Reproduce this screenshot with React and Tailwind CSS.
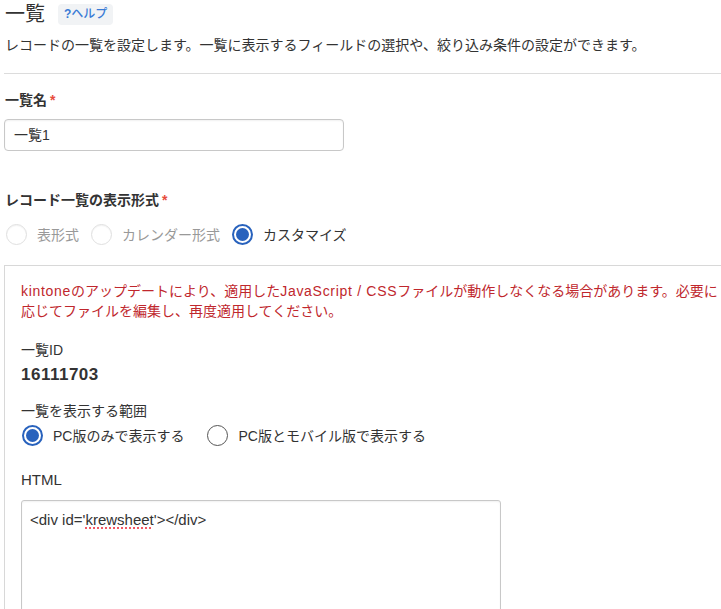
import React from "react";

const font = { fontFamily: '"Liberation Sans", "Noto Sans CJK JP", sans-serif' };

function Radio({ checked, disabled, label }) {
  return (
    <label className="flex items-center">
      {checked ? (
        <span className="w-[21px] h-[21px] rounded-full border-2 border-[#2862bd] flex items-center justify-center bg-white">
          <span className="w-[13px] h-[13px] rounded-full bg-[#2862bd]" />
        </span>
      ) : (
        <span
          className={
            "w-[21px] h-[21px] rounded-full bg-white border " +
            (disabled ? "border-[#e0e0e0] shadow-[inset_0_1px_1px_rgba(0,0,0,0.05)]" : "border-[#555]")
          }
        />
      )}
      <span className={"ml-[10px] text-[14px] leading-[20px] " + (disabled ? "text-[#999]" : "text-[#333]")}>{label}</span>
    </label>
  );
}

export default function App() {
  return (
    <div className="w-[721px] h-[609px] overflow-hidden bg-white text-[#333]" style={font}>
      <div className="flex items-center pl-[5px] pt-[2px] h-[26px]">
        <h1 className="text-[20px] leading-[24px] text-[#333]">一覧</h1>
        <span className="ml-[13px] h-[21px] px-[6px] flex items-center rounded-[4px] bg-[#f1f3f5] text-[12px] text-[#3a7bd5] font-medium">
          <span className="font-bold">?</span>ヘルプ
        </span>
      </div>
      <p className="pl-[5px] mt-[9px] text-[14px] leading-[20px]">
        レコードの一覧を設定します。一覧に表示するフィールドの選択や、絞り込み条件の設定ができます。
      </p>
      <div className="ml-[4px] mt-[18px] border-t border-[#dcdcdc]" />
      <div className="pl-[5px] mt-[16px] text-[14px] leading-[20px] font-bold">
        一覧名<span className="text-[#e74c3c] ml-[3px]">*</span>
      </div>
      <div className="ml-[4px] mt-[9px] w-[340px] h-[32px] border border-[#c8c8c8] rounded-[4px] flex items-center pl-[9px] text-[14px] shadow-[inset_0_1px_2px_rgba(0,0,0,0.06)]">
        一覧1
      </div>
      <div className="pl-[5px] mt-[39px] text-[14px] leading-[20px] font-bold">
        レコード一覧の表示形式<span className="text-[#e74c3c] ml-[3px]">*</span>
      </div>
      <div className="flex items-center ml-[6px] mt-[14px] gap-[12px]">
        <Radio disabled label="表形式" />
        <Radio disabled label="カレンダー形式" />
        <Radio checked label="カスタマイズ" />
      </div>
      <div className="ml-[4px] mt-[20px] w-[740px] border border-[#d8d8d8] pl-[16px] pt-[15px] pb-[40px]">
        <p className="text-[14px] leading-[20px] text-[#c0272d] whitespace-nowrap">
          <span className="tracking-[0.7px]">kintone</span>のアップデートにより、適用した
          <span className="tracking-[0.7px]">JavaScript / CSS</span>ファイルが動作しなくなる場合があります。必要に
          <br />
          応じてファイルを編集し、再度適用してください。
        </p>
        <div className="mt-[19px] text-[14px] leading-[20px]">一覧ID</div>
        <div className="mt-[3px] text-[17px] leading-[24px] font-bold tracking-[0.5px]">16111703</div>
        <div className="mt-[14px] text-[14px] leading-[20px]">一覧を表示する範囲</div>
        <div className="flex items-center mt-[4px] ml-[1px] gap-[23px]">
          <Radio checked label="PC版のみで表示する" />
          <Radio label="PC版とモバイル版で表示する" />
        </div>
        <div className="mt-[24px] text-[15px] leading-[20px]">HTML</div>
        <div className="mt-[10px] w-[480px] h-[160px] border border-[#c8c8c8] rounded-[3px] pl-[8px] pt-[9px] text-[15px] leading-[20px] shadow-[inset_0_1px_2px_rgba(0,0,0,0.06)]">
          &lt;div id='<span className="underline decoration-dotted decoration-[#e23] underline-offset-[3px]">krewsheet</span>'&gt;&lt;/div&gt;
        </div>
      </div>
    </div>
  );
}
